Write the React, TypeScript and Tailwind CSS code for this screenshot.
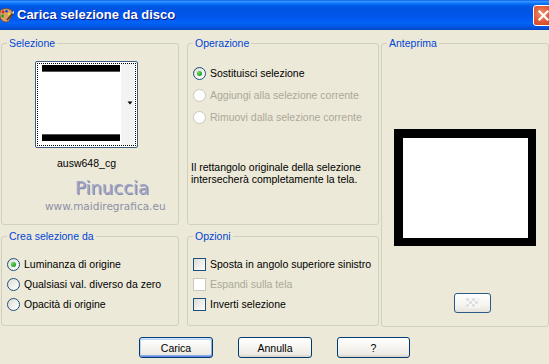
import React from "react";

const F = "font-['Liberation_Sans',Arial,sans-serif]";

function Radio({ checked, disabled }: { checked?: boolean; disabled?: boolean }) {
  return (
    <div
      className={
        "relative w-[13px] h-[13px] rounded-full border shrink-0 " +
        (disabled
          ? "border-[#CAC8BB] bg-white"
          : "border-[#1C5180] bg-[linear-gradient(135deg,#DCDBD5_0%,#F2F1EC_55%,#FFFFFF_100%)]")
      }
    >
      {checked && (
        <div className="absolute left-[3px] top-[3px] w-[5px] h-[5px] rounded-full bg-[radial-gradient(circle_at_35%_35%,#6CDA5E_0%,#2BA82B_60%,#1A8A1A_100%)]" />
      )}
    </div>
  );
}

function Check({ disabled }: { disabled?: boolean }) {
  return (
    <div
      className={
        "w-[13px] h-[13px] border shrink-0 " +
        (disabled
          ? "border-[#CAC8BB] bg-white"
          : "border-[#1C5180] bg-[linear-gradient(135deg,#DCDCD7_0%,#F0EFEA_55%,#FFFFFF_100%)]")
      }
    />
  );
}

function Group({
  label,
  className,
  children,
}: {
  label: string;
  className: string;
  children?: React.ReactNode;
}) {
  return (
    <div className={"relative border border-[#D0D0BF] rounded-[3px] " + className}>
      <span className="absolute top-[-7px] left-[5px] px-[2px] bg-[#ECE9D8] text-[#0046D5] text-[10.5px] leading-[12px] whitespace-nowrap">
        {label}
      </span>
      {children}
    </div>
  );
}

function Btn({
  children,
  def,
  className,
}: {
  children?: React.ReactNode;
  def?: boolean;
  className?: string;
}) {
  return (
    <div
      className={
        "flex items-center justify-center border border-[#003C74] rounded-[3px] bg-[linear-gradient(180deg,#FFFFFF_0%,#F5F4EF_50%,#ECEBE6_85%,#D6D0C5_100%)] text-black text-[10.5px] leading-[12px] " +
        (def
          ? "shadow-[inset_0_1px_#CEE7FF,inset_1px_0_#BCD4F6,inset_0_-1px_#6982EE,inset_-1px_0_#89ADE4,inset_0_2px_#BCD4F6,inset_0_-2px_#89ADE4] "
          : "") +
        (className || "")
      }
    >
      {children}
    </div>
  );
}

function Row({ h, children }: { h: string; children?: React.ReactNode }) {
  return <div className={"flex items-center gap-[4px] " + h}>{children}</div>;
}

export default function App() {
  return (
    <div className={"w-[549px] h-[364px] overflow-hidden bg-[#ECE9D8] flex flex-col " + F}>
      {/* Title bar */}
      <div className="h-[30px] shrink-0 flex items-start bg-[linear-gradient(180deg,#0058EE_0%,#3A93FF_4%,#288EFF_7%,#127DFF_10%,#036FFC_13%,#0262EE_17%,#0057E5_22%,#0054E3_30%,#0055EB_56%,#005BF5_66%,#0263F5_76%,#005AEA_86%,#0050D8_93%,#0046C0_100%)]">
        <svg width="16" height="16" viewBox="0 0 16 16" className="ml-[-2px] mt-[7px] shrink-0">
          <path d="M2 5 C2 2 7 1 11 2 C15 3 15 8 13 10 C11 12 12 15 8 15 C3 15 1 10 2 5 Z" fill="#D9A066" stroke="#7A4A1E" strokeWidth="0.8" />
          <circle cx="5" cy="5" r="1.4" fill="#E02020" />
          <circle cx="8.5" cy="4.3" r="1.3" fill="#2040E0" />
          <circle cx="4.6" cy="9" r="1.4" fill="#20A020" />
          <circle cx="11" cy="7" r="1.2" fill="#F0E020" />
          <path d="M9 13 L15 6" stroke="#5A3A1A" strokeWidth="1.6" />
          <path d="M14.5 6.5 L16 4.5" stroke="#E0E0E0" strokeWidth="1.6" />
        </svg>
        <span className="ml-[3px] mt-[7px] text-white font-bold text-[13px] leading-[15px] whitespace-nowrap [text-shadow:1px_1px_#0A1E8C]">
          Carica selezione da disco
        </span>
        <div className="ml-auto mr-[-5px] mt-[5px] w-[21px] h-[21px] shrink-0 rounded-[3px] border border-white bg-[radial-gradient(circle_at_40%_40%,#F0906C_0%,#E0603C_45%,#C83C1C_100%)] flex items-center justify-center">
          <svg width="13" height="13" viewBox="0 0 13 13">
            <path d="M2.5 2.5 L10.5 10.5 M10.5 2.5 L2.5 10.5" stroke="white" strokeWidth="2.2" strokeLinecap="square" />
          </svg>
        </div>
      </div>

      {/* Body */}
      <div className="flex pt-[13px] pl-[1px]">
        {/* Left column */}
        <div className="flex flex-col w-[178px] gap-[11px] shrink-0">
          <Group label="Selezione" className="h-[182px] flex flex-col items-start pt-[17px]">
            <div className="ml-[33px] w-[103px] h-[87px] border border-[#3C5C80] rounded-[2px] bg-white p-[1px]">
              <div className="w-full h-full border border-dotted border-black bg-white">
                <svg width="97" height="81" viewBox="0 0 97 81" className="block">
                  <rect x="0" y="0" width="97" height="81" fill="#FFFFFF" />
                  <rect x="83" y="0" width="13" height="81" fill="#F3F3F1" />
                  <rect x="4" y="1" width="78" height="6" fill="#000" />
                  <rect x="4" y="7" width="78" height="1" fill="#555" />
                  <rect x="4" y="70" width="78" height="1" fill="#555" />
                  <rect x="4" y="71" width="78" height="6" fill="#000" />
                  <path d="M89.5 37.5 L94.5 37.5 L92 40.5 Z" fill="#000" />
                </svg>
              </div>
            </div>
            <div className="ml-[33px] w-[103px] mt-[9px] text-center text-[10.5px] leading-[12px] text-black">
              ausw648_cg
            </div>
            <div className="ml-[73px] mt-[9px] text-[18px] leading-[20px] text-[#A2A5C6] font-['DejaVu_Sans',sans-serif] [text-shadow:1px_1px_#8388A8] whitespace-nowrap">
              Pinuccia
            </div>
            <div className="ml-[43px] mt-[2px] text-[10.5px] leading-[12px] text-[#8E8FA8] font-['DejaVu_Sans',sans-serif] whitespace-nowrap">
              www.maidiregrafica.eu
            </div>
          </Group>
          <Group label="Crea selezione da" className="h-[90px] flex flex-col pt-[17px] pl-[5px] text-[10.5px] leading-[12px] text-black">
            <Row h="h-[20px]">
              <Radio checked />
              <span>Luminanza di origine</span>
            </Row>
            <Row h="h-[20px]">
              <Radio />
              <span>Qualsiasi val. diverso da zero</span>
            </Row>
            <Row h="h-[20px]">
              <Radio />
              <span>Opacità di origine</span>
            </Row>
          </Group>
        </div>

        {/* Middle column */}
        <div className="flex flex-col w-[192px] ml-[8px] gap-[11px] shrink-0">
          <Group label="Operazione" className="h-[182px] flex flex-col pt-[18px] text-[10.5px] leading-[12px] text-black">
            <div className="pl-[5px] flex flex-col">
              <Row h="h-[22px]">
                <Radio checked />
                <span>Sostituisci selezione</span>
              </Row>
              <Row h="h-[22px]">
                <Radio disabled />
                <span className="text-[#ACA899]">Aggiungi alla selezione corrente</span>
              </Row>
              <Row h="h-[22px]">
                <Radio disabled />
                <span className="text-[#ACA899]">Rimuovi dalla selezione corrente</span>
              </Row>
            </div>
            <div className="mt-[33px] pl-[3px] whitespace-nowrap">
              <div>Il rettangolo originale della selezione</div>
              <div>intersecherà completamente la tela.</div>
            </div>
          </Group>
          <Group label="Opzioni" className="h-[90px] flex flex-col pt-[17px] pl-[5px] text-[10.5px] leading-[12px] text-black">
            <Row h="h-[20px]">
              <Check />
              <span>Sposta in angolo superiore sinistro</span>
            </Row>
            <Row h="h-[20px]">
              <Check disabled />
              <span className="text-[#ACA899]">Espandi sulla tela</span>
            </Row>
            <Row h="h-[20px]">
              <Check />
              <span>Inverti selezione</span>
            </Row>
          </Group>
        </div>

        {/* Right column */}
        <Group label="Anteprima" className="ml-[2px] w-[168px] h-[284px] shrink-0 flex flex-col items-start">
          <div className="mt-[85px] ml-[12px] w-[142px] h-[117px] bg-white border-black border-t-[9px] border-l-[9px] border-r-[8px] border-b-[8px]" />
          <div className="mt-[47px] ml-[72px] w-[37px] h-[20px] border border-[#2C5A88] rounded-[3px] bg-[linear-gradient(180deg,#FFFFFF_0%,#F5F4EF_60%,#E6E4DC_100%)] flex items-center justify-center">
            <svg width="14" height="10" viewBox="0 0 14 10">
              <rect x="0" y="0" width="14" height="10" fill="#F6F6F6" />
              <rect x="0" y="0" width="3" height="3" fill="#E2E2E2" />
              <rect x="6" y="0" width="3" height="3" fill="#E2E2E2" />
              <rect x="3" y="3" width="3" height="3" fill="#E2E2E2" />
              <rect x="9" y="3" width="3" height="3" fill="#E2E2E2" />
              <rect x="0" y="6" width="3" height="3" fill="#E2E2E2" />
              <rect x="6" y="6" width="3" height="3" fill="#E2E2E2" />
            </svg>
          </div>
        </Group>
      </div>

      {/* Buttons */}
      <div className="flex mt-[10px] pl-[139px] gap-[25px]">
        <Btn def className="w-[74px] h-[21px]">Carica</Btn>
        <Btn className="w-[74px] h-[21px]">Annulla</Btn>
        <Btn className="w-[73px] h-[21px]">?</Btn>
      </div>
    </div>
  );
}
